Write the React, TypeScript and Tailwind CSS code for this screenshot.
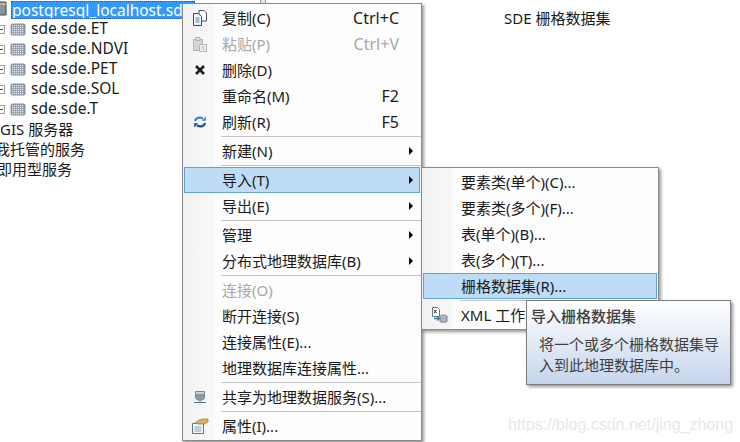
const font = "[font-family:'Noto_Sans','Noto_Sans_CJK_SC',sans-serif]";

interface Row {
  label?: string;
  shortcut?: string;
  arrow?: boolean;
  disabled?: boolean;
  active?: boolean;
  icon?: React.ReactNode;
  sep?: boolean;
}

const CopyIcon = () => (
  <svg width="16" height="16" viewBox="0 0 16 16" fill="none">
    <path d="M7 .5h5l2.5 2.5v8H7z" fill="#fff" stroke="#4a5560" />
    <path d="M1.500 3.500h5l3 3v9h-8z" fill="#f3f7fb" stroke="#3f4a55" />
    <path d="M3.500 8h4M3.500 10h4M3.500 12h4" stroke="#3d86c6" />
  </svg>
);

const PasteIcon = () => (
  <svg width="16" height="17" viewBox="0 0 16 17" fill="none">
    <path d="M1.500 3.500h9v11h-9z" fill="#d4d4d4" stroke="#b4b4b4" />
    <path d="M4 1.500h4v3H4z" fill="#e4e4e4" stroke="#b0b0b0" />
    <path d="M7.500 8.500h7v7h-7z" fill="#f2f2f2" stroke="#b4b4b4" />
    <path d="M9 11h4M9 13h4" stroke="#c4c4c4" />
  </svg>
);

const DeleteIcon = () => (
  <svg width="12" height="12" viewBox="0 0 12 12">
    <path d="M2 2l8 8M10 2l-8 8" stroke="#1c1c1c" strokeWidth="2.6" />
  </svg>
);

const RefreshIcon = () => (
  <svg width="14" height="14" viewBox="0 0 14 14" fill="none">
    <path d="M2 6c.5-3 4.500-4.500 8-2.500" stroke="#3f86c9" strokeWidth="2.2" />
    <path d="M12.800 1.500v4.200H8.600z" fill="#3f86c9" />
    <path d="M12 8c-.5 3-4.500 4.500-8 2.500" stroke="#1f4e8c" strokeWidth="2.2" />
    <path d="M1.200 12.500V8.300h4.200z" fill="#1f4e8c" />
  </svg>
);

const ServerIcon = () => (
  <svg width="12" height="14" viewBox="0 0 12 14" fill="none">
    <path d="M1.500 1.500h9v6.500l-2 2h-5l-2-2z" fill="#8d9aa6" stroke="#7b8894" />
    <path d="M2 2h8v2H2z" fill="#c8d0d8" />
    <path d="M6 10v2M0 12.500h12" stroke="#5d7896" />
  </svg>
);

const PropsIcon = () => (
  <svg width="18" height="16" viewBox="0 0 18 16" fill="none">
    <path d="M1.500 5.500h11v10h-11z" fill="#f4f6f8" stroke="#66727e" />
    <path d="M3.500 9h7M3.500 11h7M3.500 13h7" stroke="#8aa4c0" />
    <path d="M4 5l4-3 4-1h5v3l-4 2H7z" fill="#d8b26a" stroke="#96713a" strokeWidth=".7" />
  </svg>
);

const XmlIcon = () => (
  <svg width="17" height="17" viewBox="0 0 17 17" fill="none">
    <path d="M1.500.5h5l2 2v7h-7z" fill="#fff" stroke="#6c7680" />
    <path d="M3 3l2.500 3M5.500 3L3 6" stroke="#333" />
    <path d="M3 11.500h5M6 9.500l2.500 2-2.500 2" stroke="#2f7fc4" strokeWidth="1.300" />
    <ellipse cx="12.500" cy="9.500" rx="3.500" ry="1.500" fill="#c5ced8" stroke="#76818c" />
    <path d="M9 9.500v5c0 1 7 1 7 0v-5" fill="#a9b4c0" stroke="#76818c" />
  </svg>
);

const RasterIcon = () => (
  <svg width="16" height="13" viewBox="0 0 16 13" className="shrink-0">
    <rect x=".5" y=".5" width="15" height="12" rx="2" fill="#8a94a0" />
    {[2, 4, 6, 8, 10, 12].map((x) =>
      [2, 4, 6, 8, 10].map((y) => <rect key={`${x}-${y}`} x={x} y={y} width="1.300" height="1.300" fill="#e2e7ee" />)
    )}
  </svg>
);

const Arrow = () => <div className="h-0 w-0 border-y-[4px] border-l-[4px] border-y-transparent border-l-black" />;

const mainMenu: Row[] = [
  { label: "复制(C)", shortcut: "Ctrl+C", icon: <CopyIcon /> },
  { label: "粘贴(P)", shortcut: "Ctrl+V", disabled: true, icon: <PasteIcon /> },
  { label: "删除(D)", icon: <DeleteIcon /> },
  { label: "重命名(M)", shortcut: "F2" },
  { label: "刷新(R)", shortcut: "F5", icon: <RefreshIcon /> },
  { sep: true },
  { label: "新建(N)", arrow: true },
  { sep: true },
  { label: "导入(T)", arrow: true, active: true },
  { label: "导出(E)", arrow: true },
  { sep: true },
  { label: "管理", arrow: true },
  { label: "分布式地理数据库(B)", arrow: true },
  { sep: true },
  { label: "连接(O)", disabled: true },
  { label: "断开连接(S)" },
  { label: "连接属性(E)..." },
  { label: "地理数据库连接属性..." },
  { sep: true },
  { label: "共享为地理数据服务(S)...", icon: <ServerIcon /> },
  { sep: true },
  { label: "属性(I)...", icon: <PropsIcon /> },
];

const subMenu: Row[] = [
  { label: "要素类(单个)(C)..." },
  { label: "要素类(多个)(F)..." },
  { label: "表(单个)(B)..." },
  { label: "表(多个)(T)..." },
  { label: "栅格数据集(R)...", active: true },
  { sep: true },
  { label: "XML 工作空间文档(X)...", icon: <XmlIcon /> },
];

function MenuRow({ row }: { row: Row }) {
  if (row.sep) {
    return (
      <div className="flex h-[3px] items-center">
        <div className="w-[30px] shrink-0" />
        <div className="ml-[8px] h-px flex-1 bg-[#c4c4c4]" />
      </div>
    );
  }
  return (
    <div
      className={`mx-px flex h-[26px] items-center border text-[15px] ${
        row.active ? "border-[#62a2d9] bg-[#bfdcf7]" : "border-transparent"
      } ${row.disabled ? "text-[#a8a8a8]" : "text-[#1a1a1a]"}`}
    >
      <div className="flex w-[30px] shrink-0 items-center justify-center">{row.icon}</div>
      <div className="ml-[7px] flex-1 whitespace-nowrap">{row.label}</div>
      {row.shortcut && <div className="mr-[20px] text-[16px]">{row.shortcut}</div>}
      {row.arrow && <div className="mr-[6px]"><Arrow /></div>}
    </div>
  );
}

function Menu({ rows, className }: { rows: Row[]; className: string }) {
  return (
    <div
      className={`absolute overflow-hidden border border-[#8a8a8a] bg-[linear-gradient(to_right,#f1f1f1_0,#f9f9f9_31px,#fdfdfd_31px)] py-px shadow-[2px_2px_3px_rgba(0,0,0,0.4)] ${className}`}
    >
      {rows.map((row, i) => (
        <MenuRow key={i} row={row} />
      ))}
    </div>
  );
}

const trees = ["sde.sde.ET", "sde.sde.NDVI", "sde.sde.PET", "sde.sde.SOL", "sde.sde.T"];

export default function App() {
  return (
    <div className={`relative h-[442px] w-[740px] overflow-hidden bg-white ${font}`}>
      <div className="flex flex-col text-[15px] text-[#1a1a1a]">
        <div className="flex h-[19px] items-center">
          <svg width="8" height="18" viewBox="0 0 8 18" className="shrink-0">
            <path d="M-4 1h10v13H-4z" fill="#8b9299" stroke="#444" />
            <path d="M-4 3h10" stroke="#d8d8d8" />
          </svg>
          <div className="ml-[3px] h-[18px] w-[184px] overflow-hidden whitespace-nowrap border border-dotted border-[#1a5fa8] bg-[#3399ff] text-[15.5px] leading-[16px] text-white">
            postgresql_localhost.sde
          </div>
        </div>
        <div className="flex flex-col">
          {trees.map((t) => (
            <div key={t} className="flex h-[20px] items-center">
              <div className="flex h-[9px] w-[5px] shrink-0 items-center border-y border-r border-[#a0a0a0]">
                <div className="h-px w-[3px] bg-[#555555]" />
              </div>
              <div className="ml-[5px]"><RasterIcon /></div>
              <div className="ml-[5px] text-[15.5px]">{t}</div>
            </div>
          ))}
        </div>
        <div className="flex h-[20px] items-center whitespace-nowrap">GIS 服务器</div>
        <div className="-ml-[5px] flex h-[20px] items-center whitespace-nowrap">我托管的服务</div>
        <div className="-ml-[3px] flex h-[20px] items-center whitespace-nowrap">即用型服务</div>
      </div>

      <div className="absolute left-[504px] top-[7px] text-[15px] text-[#1a1a1a]">SDE 栅格数据集</div>

      <div className="absolute left-[260px] top-0 h-[4px] w-[6px] border-x border-[#a0a0a0] bg-[#e8e8e8]" />

      <Menu rows={mainMenu} className="left-[182px] top-[3px] w-[240px]" />
      <Menu rows={subMenu} className="left-[421px] top-[167px] w-[238px]" />

      <div className="absolute left-[526px] top-[300px] h-[85px] w-[205px] border border-[#7d7d7d] bg-gradient-to-b from-white to-[#c6d5ec] pl-[4px] pt-[5px] text-[#3f3f3f] shadow-[2px_2px_3px_rgba(0,0,0,0.4)]">
        <div className="text-[15px] font-medium leading-[20px]">导入栅格数据集</div>
        <div className="mt-[8px] pl-[8px] text-[15px] leading-[21px]">
          将一个或多个栅格数据集导
          <br />
          入到此地理数据库中。
        </div>
      </div>

      <div className="absolute left-[508px] top-[413px] text-[16px] text-[#e8e8e8] [font-family:'Liberation_Sans',sans-serif]">
        https://blog.csdn.net/jing_zhong
      </div>
    </div>
  );
}
